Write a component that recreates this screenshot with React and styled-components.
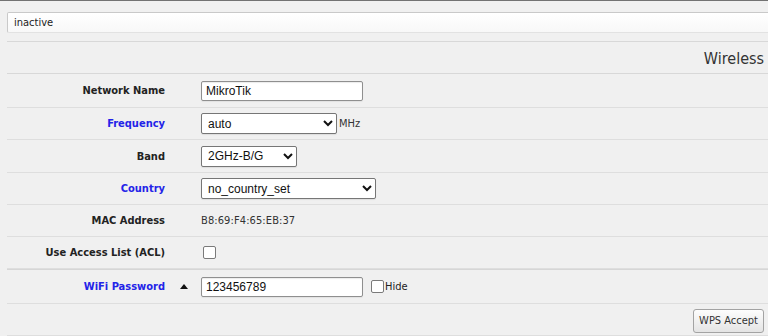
import React from 'react';
import styled, { createGlobalStyle } from 'styled-components';

const GlobalStyle = createGlobalStyle`
    html, body {
        margin: 0;
        background: #f0f0f0;
        overflow: hidden;
    }
    body {
        font-family: "DejaVu Sans Condensed", "DejaVu Sans", sans-serif;
        font-size: 11px;
        color: #222;
        border-top: 1px solid #727272;
    }
`

const Page = styled.div`
    padding: 11px 4px 0 7px;
`

const StatusBox = styled.div`
    height: 19px;
    line-height: 19px;
    margin-right: -20px;
    padding-left: 6px;
    border: 1px solid #c9c9c9;
    border-bottom-color: #e2e2e2;
    border-radius: 2px 0 0 2px;
    background: linear-gradient(#ffffff, #f8f8f8);
    color: #222;
`

const Header = styled.div`
    margin-top: 8px;
    margin-right: -4px;
    height: 31px;
    padding-right: 4px;
    border-top: 1px solid #d8d8d8;
    border-bottom: 1px solid #d8d8d8;
    display: flex;
    align-items: flex-end;
    justify-content: flex-end;
`

const Title = styled.span`
    font-size: 16px;
    color: #333;
    line-height: 16px;
    padding-bottom: 6px;
`

const Row = styled.div`
    display: grid;
    grid-template-columns: 158px 36px 1fr;
    align-items: center;
    height: ${p => p.h}px;
    margin-right: -4px;
    padding-right: 4px;
    border-bottom: 1px solid #dedede;
    border-top: ${p => p.doubleTop ? '1px solid #d6d6d6' : 'none'};
`

const Label = styled.div`
    text-align: right;
    font-weight: bold;
    color: ${p => p.blue ? '#2323e8' : '#222'};
`

const Arrow = styled.div`
    display: flex;
    justify-content: center;
    padding-left: 2px;
`

const Value = styled.div`
    display: flex;
    align-items: center;
    gap: ${p => p.gap || 0}px;
`

const TextInput = styled.input`
    box-sizing: border-box;
    width: ${p => p.w}px;
    height: 20px;
    margin: 0;
    padding: 0 4px;
    border: 1px solid #8f8f8f;
    border-radius: 2px;
    box-shadow: inset 0 1px 1px rgba(0, 0, 0, 0.08), 0 1px 1px rgba(0, 0, 0, 0.06);
    font-family: "Liberation Sans", Arial, sans-serif;
    font-size: 12px;
    color: #111;
    background: #fff;
    outline: none;
`

const Select = styled.select`
    box-sizing: border-box;
    width: ${p => p.w}px;
    height: 21px;
    margin: 0;
    padding: 0 2px;
    border: 1px solid #767676;
    border-radius: 2px;
    background: #fff;
    box-shadow: 0 1px 1px rgba(0, 0, 0, 0.08);
    font-family: "Liberation Sans", Arial, sans-serif;
    font-size: 12px;
    color: #111;
`

const Unit = styled.span`
    margin-left: 2px;
    color: #333;
`

const Mono = styled.span`
    color: #333;
    letter-spacing: 0.1px;
`

const Check = styled.input`
    appearance: none;
    box-sizing: border-box;
    width: 13px;
    height: 13px;
    margin: 0 ${p => p.mr || 0}px 0 ${p => p.ml || 0}px;
    border: 1px solid #7a7a7a;
    border-radius: 2px;
    background: #fff;
`

const ButtonRow = styled.div`
    display: flex;
    justify-content: flex-end;
    align-items: center;
    height: 31px;
    margin-right: -4px;
    padding-right: 4px;
    border-bottom: 1px solid #dedede;
`

const Button = styled.button`
    height: 24px;
    padding: 0 5px;
    margin-top: 2px;
    border: 1px solid #a3a3a3;
    border-radius: 3px;
    background: linear-gradient(#fdfdfd, #e4e4e4);
    font-family: "DejaVu Sans Condensed", "DejaVu Sans", sans-serif;
    font-size: 11px;
    color: #333;
`

function UpArrow() {
    return (
        <svg width="8" height="5" viewBox="0 0 8 5">
            <path d="M0 5 L4 0 L8 5 Z" fill="#111" />
        </svg>
    )
}

export default function App() {
    return (
        <Page>
            <GlobalStyle />
            <StatusBox>inactive</StatusBox>
            <Header>
                <Title>Wireless</Title>
            </Header>

            <Row h={33}>
                <Label>Network Name</Label>
                <div />
                <Value>
                    <TextInput w={162} defaultValue='MikroTik' />
                </Value>
            </Row>
            <Row h={31}>
                <Label blue>Frequency</Label>
                <div />
                <Value>
                    <Select w={136} defaultValue='auto'>
                        <option>auto</option>
                    </Select>
                    <Unit>MHz</Unit>
                </Value>
            </Row>
            <Row h={32}>
                <Label>Band</Label>
                <div />
                <Value>
                    <Select w={96} defaultValue='2GHz-B/G'>
                        <option>2GHz-B/G</option>
                    </Select>
                </Value>
            </Row>
            <Row h={31}>
                <Label blue>Country</Label>
                <div />
                <Value>
                    <Select w={175} defaultValue='no_country_set'>
                        <option>no_country_set</option>
                    </Select>
                </Value>
            </Row>
            <Row h={31}>
                <Label>MAC Address</Label>
                <div />
                <Value>
                    <Mono>B8:69:F4:65:EB:37</Mono>
                </Value>
            </Row>
            <Row h={31}>
                <Label>Use Access List (ACL)</Label>
                <div />
                <Value>
                    <Check type='checkbox' ml={2} />
                </Value>
            </Row>
            <Row h={33} doubleTop>
                <Label blue>WiFi Password</Label>
                <Arrow>
                    <UpArrow />
                </Arrow>
                <Value>
                    <TextInput w={162} defaultValue='123456789' />
                    <Check type='checkbox' ml={8} mr={1} />
                    <span>Hide</span>
                </Value>
            </Row>
            <ButtonRow>
                <Button>WPS Accept</Button>
            </ButtonRow>
        </Page>
    )
}
